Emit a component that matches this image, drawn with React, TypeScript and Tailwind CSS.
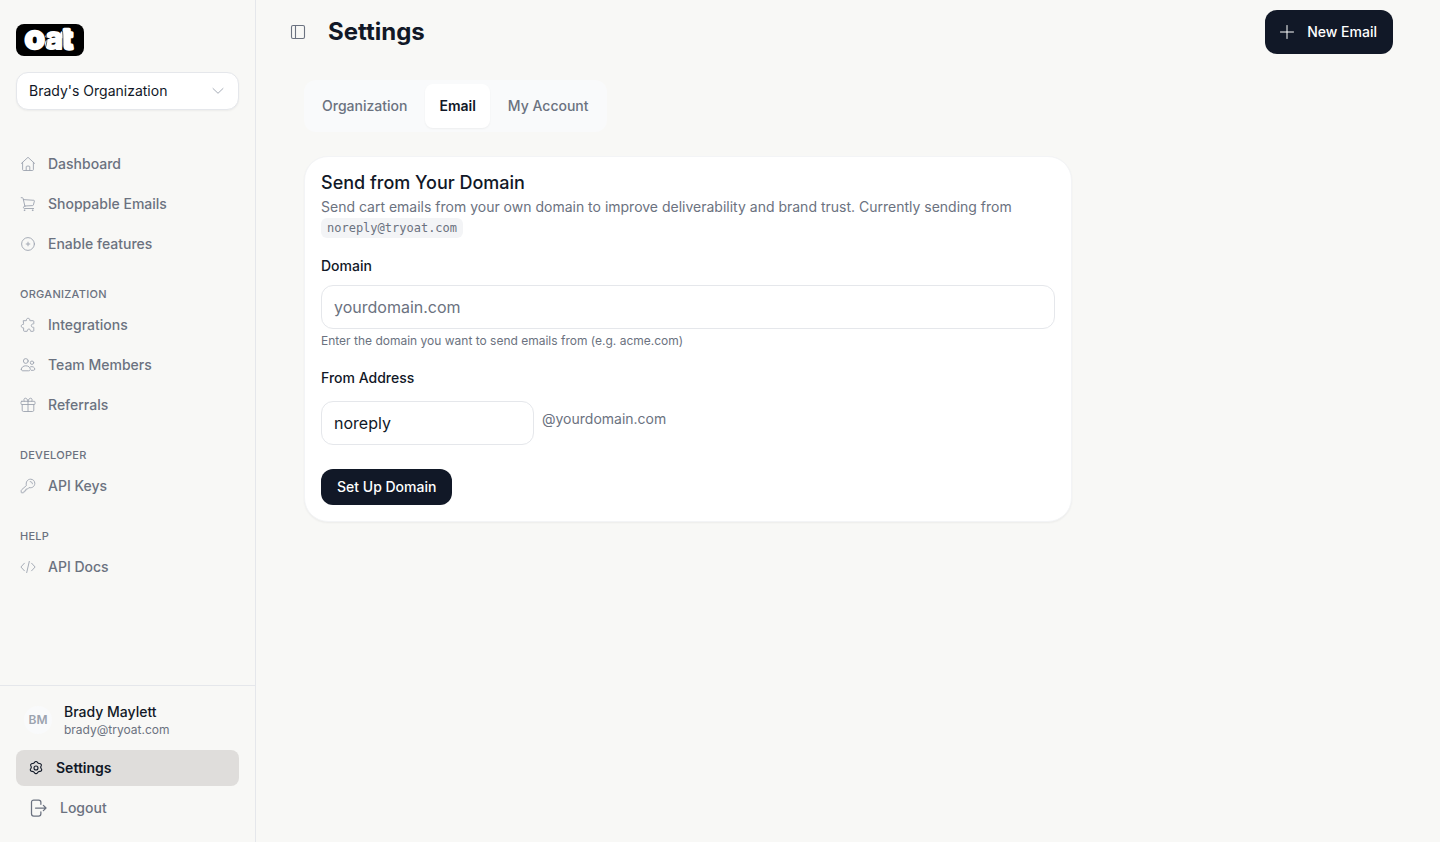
import type { ReactNode } from "react";

function Icon({ children, className = "size-4" }: { children: ReactNode; className?: string }) {
  return (
    <svg
      viewBox="0 0 16 16"
      fill="none"
      stroke="currentColor"
      strokeWidth="0.9"
      strokeLinecap="round"
      strokeLinejoin="round"
      aria-hidden="true"
      className={`shrink-0 ${className}`}
    >
      {children}
    </svg>
  );
}

const icons = {
  home: (
    <Icon>
      <path d="M1.4 7.4 8 1.3l6.6 6.1M2.6 6.4v7.2c0 .5.4.9.9.9h9c.5 0 .9-.4.9-.9V6.4M6.2 14.3v-3.4c0-.5.3-.8.8-.8h2c.5 0 .8.3.8.8v3.4" />
    </Icon>
  ),
  cart: (
    <Icon>
      <path d="M1.2 1.7h1.1c.4 0 .7.3.8.7l1.8 7.8M3.4 3.6l10.4.7c.4 0 .7.4.6.8l-1 3.8c-.1.4-.4.7-.8.7l-7.8.4M4.9 10.2c-.9 0-1.5.6-1.5 1.2s.5 1.1 1.2 1.1h9" />
      <circle cx="4.4" cy="14.2" r=".35" />
      <circle cx="12.6" cy="14.2" r=".35" />
    </Icon>
  ),
  plusCircle: (
    <Icon>
      <circle cx="8" cy="8" r="6.4" />
      <path d="M8 6.2v3.6M6.2 8h3.6" />
    </Icon>
  ),
  puzzle: (
    <Icon>
      <path d="M3.6 3.7h2.6c.3 0 .4-.3.3-.6-.2-.9.4-1.8 1.6-1.8s1.9.9 1.6 1.8c-.1.3.1.6.4.6h3c.4 0 .7.3.7.7v2.2c0 .3-.3.5-.6.4-1-.2-1.900.4-1.900 1.600s.9 1.800 1.900 1.600c.3-.1.6.1.6.4v3c0 .4-.3.7-.7.7h-2.300c-.3 0-.5-.3-.4-.6.2-.9-.5-1.600-1.500-1.600s-1.700.7-1.500 1.600c.1.3-.1.6-.4.6H4.300c-.4 0-.7-.3-.7-.7v-2.500c0-.3-.3-.5-.6-.4-.9.2-1.700-.5-1.700-1.600s.8-1.800 1.700-1.600c.3.1.6-.1.6-.4z" />
    </Icon>
  ),
  users: (
    <Icon>
      <circle cx="5.8" cy="4" r="2.4" />
      <circle cx="12" cy="5.7" r="1.7" />
      <path d="M1.3 12.3c0-2 2-3.5 4.5-3.5s4.500 1.500 4.500 3.500c0 1-.7 1.500-1.700 1.500H3c-1 0-1.700-.5-1.700-1.500zM10.500 9.800c2.200-.8 4.300.6 4.300 2.300 0 .7-.5 1.200-1.200 1.200h-2.200" />
    </Icon>
  ),
  gift: (
    <Icon>
      <rect x="1" y="4.3" width="14" height="3.2" rx=".8" />
      <path d="M2.2 7.5v5.7c0 .8.5 1.3 1.3 1.3h9c.8 0 1.3-.5 1.3-1.3V7.5M8 4.300v10.200M8 4.300C7.600 2.300 6.600 1.200 5.300 1.200S3.500 2.800 4.200 4.200M8 4.300c.4-2 1.400-3.100 2.700-3.100s1.800 1.600 1.100 3" />
    </Icon>
  ),
  key: (
    <Icon>
      <path d="M6.300 7.200C5.500 3.800 7.600 1.200 10.600 1.200c2.400 0 4.200 1.800 4.200 4.100 0 3-2.500 5.100-5.900 4.300l-1.300 1.400-1.700.2-.2 1.700-1.600.3-.2 1.200-.4.4H1.700c-.3 0-.5-.2-.5-.5v-1.700c0-.3.1-.5.3-.7z" />
      <path d="M10.200 3.600c1.300 0 2.200.9 2.200 2.200" />
    </Icon>
  ),
  code: (
    <Icon>
      <path d="M4.400 4.200.9 8l3.500 3.800M11.600 4.200 15.100 8l-3.500 3.800M9.300 2.400 6.700 13.600" />
    </Icon>
  ),
};

function NavLink({ icon, children }: { icon: ReactNode; children: ReactNode }) {
  return (
    <a href="#" className="flex h-9 items-center gap-3 rounded-lg px-1 text-sm font-medium text-[#6b7280]">
      <span className="text-[#9ca3af]">{icon}</span>
      {children}
    </a>
  );
}

function NavGroup({ title, children }: { title: string; children: ReactNode }) {
  return (
    <div className="mt-6">
      <h2 className="mb-1 px-1 text-[11px] leading-[17px] font-medium tracking-wide text-[#6b7280] uppercase">
        {title}
      </h2>
      <div className="flex flex-col gap-1">{children}</div>
    </div>
  );
}

function Logo() {
  return (
    <svg viewBox="0 0 68 32" className="h-8 w-[68px] overflow-visible" role="img" aria-label="oat">
      <rect width="68" height="32" rx="8" />
      <g
        fill="#fff"
        stroke="#fff"
        strokeLinejoin="round"
        fontFamily="Inter, sans-serif"
      >
        <text x="8.5" y="25" fontSize="33" fontWeight="800" strokeWidth="2.4">o</text>
        <text x="29" y="25" fontSize="31" fontWeight="700" strokeWidth="2">a</text>
        <text x="46" y="25" fontSize="28" fontWeight="800" strokeWidth="3.4">t</text>
      </g>
      <path d="M29.200 8c2.200 4 2.200 11 0 16M46.500 7c.8 5 .2 12 .8 18" fill="none" stroke="#000" strokeWidth=".6" />
    </svg>
  );
}

function Sidebar() {
  return (
    <aside className="flex w-64 shrink-0 flex-col border-r border-[#e5e7eb]">
      <div className="flex flex-col gap-4 px-4 pt-6">
        <Logo />
        <div className="grid items-center">
          <select
            aria-label="Organization"
            className="col-start-1 row-start-1 h-[38px] w-full appearance-none rounded-xl border border-[#e5e7eb] bg-white px-3 text-sm text-[#111827] shadow-xs"
          >
            <option>Brady's Organization</option>
          </select>
          <span className="pointer-events-none col-start-1 row-start-1 mr-3 justify-self-end text-[#9ca3af]">
            <Icon>
              <path d="m2 5.500 5 4.800 5-4.800" />
            </Icon>
          </span>
        </div>
      </div>
      <nav className="flex-1 px-4 pt-9">
        <div className="flex flex-col gap-1">
          <NavLink icon={icons.home}>Dashboard</NavLink>
          <NavLink icon={icons.cart}>Shoppable Emails</NavLink>
          <NavLink icon={icons.plusCircle}>Enable features</NavLink>
        </div>
        <NavGroup title="Organization">
          <NavLink icon={icons.puzzle}>Integrations</NavLink>
          <NavLink icon={icons.users}>Team Members</NavLink>
          <NavLink icon={icons.gift}>Referrals</NavLink>
        </NavGroup>
        <NavGroup title="Developer">
          <NavLink icon={icons.key}>API Keys</NavLink>
        </NavGroup>
        <NavGroup title="Help">
          <NavLink icon={icons.code}>API Docs</NavLink>
        </NavGroup>
      </nav>
      <div className="border-t border-[#e5e7eb] p-4">
        <div className="mb-3 flex items-center gap-3 px-2">
          <span className="flex size-7 items-center justify-center rounded-full bg-[#f9fafb] text-xs font-semibold text-[#9ca3af]">
            BM
          </span>
          <div>
            <p className="text-sm font-medium text-[#111827]">Brady Maylett</p>
            <p className="text-xs text-[#6b7280]">brady@tryoat.com</p>
          </div>
        </div>
        <a
          href="#"
          aria-current="page"
          className="flex h-9 items-center gap-3 rounded-lg bg-[#dfdddb] px-3 text-sm font-semibold text-[#111827]"
        >
          <Icon>
            <path
              strokeWidth="1.1"
              d="M6.600 2.300c.6-1.100 2.200-1.100 2.800 0 .4.800 1.100 1.200 2 1.200 1.500 0 2.400 1.200 1.700 2.500-.5.800-.5 1.500-.1 2.200.2.300.3.500.5.700.6 1.300-.2 2.500-1.700 2.500-1.100 0-1.800.4-2.300 1.300-.6 1.200-2.400 1.200-3 0-.5-.9-1.200-1.300-2.300-1.300-1.500 0-2.300-1.200-1.700-2.500.2-.2.3-.4.5-.7.4-.7.4-1.400-.1-2.200-.7-1.300.2-2.500 1.700-2.500.9 0 1.600-.4 2-1.200z"
            />
            <circle cx="8" cy="8" r="2" strokeWidth="1.1" />
          </Icon>
          Settings
        </a>
        <button type="button" className="mt-1 flex h-9 w-full items-center gap-3 px-3 text-sm font-medium text-[#6b7280]">
          <Icon className="size-5">
            <path d="M10.300 5V3.400c0-1.100-.7-1.800-1.800-1.800H4.600c-1.100 0-1.800.7-1.800 1.800v9.200c0 1.100.7 1.800 1.800 1.800h3.900c1.100 0 1.800-.7 1.800-1.800V11M6 8h8.300M12.300 5.900 14.400 8l-2.100 2.100" strokeWidth="1" />
          </Icon>
          Logout
        </button>
      </div>
    </aside>
  );
}

function Tab({ active = false, children }: { active?: boolean; children: ReactNode }) {
  return (
    <button
      type="button"
      role="tab"
      aria-selected={active}
      className={`h-11 rounded-lg px-3.5 text-sm ${
        active ? "bg-white font-semibold text-[#111827] shadow-xs" : "font-medium text-[#6b7280]"
      }`}
    >
      {children}
    </button>
  );
}

function DomainCard() {
  return (
    <section className="max-w-3xl rounded-3xl border border-[#f3f4f6] bg-white p-4 shadow-xs">
      <h2 className="text-lg leading-5 font-medium text-[#111827]">Send from Your Domain</h2>
      <p className="mt-1 text-sm text-[#6b7280]">
        Send cart emails from your own domain to improve deliverability and brand trust. Currently sending from{" "}
        <code className="rounded-md bg-[#f3f4f6] px-1.5 py-[3px] font-['DejaVu_Sans_Mono',monospace] text-xs">
          noreply@tryoat.com
        </code>
      </p>
      <form>
        <label htmlFor="domain" className="mt-[19px] block text-sm font-medium text-[#111827]">
          Domain
        </label>
        <input
          id="domain"
          type="text"
          placeholder="yourdomain.com"
          className="mt-[9px] block h-11 w-full rounded-xl border border-[#e5e7eb] px-3 text-base text-[#111827] placeholder:text-[#6b7280]"
        />
        <p className="mt-1 text-xs text-[#6b7280]">Enter the domain you want to send emails from (e.g. acme.com)</p>
        <label htmlFor="from" className="mt-[19px] block text-sm font-medium text-[#111827]">
          From Address
        </label>
        <div className="mt-[13px] flex gap-2">
          <input
            id="from"
            type="text"
            defaultValue="noreply"
            className="h-11 w-[213px] rounded-xl border border-[#e5e7eb] px-3 text-base text-[#111827]"
          />
          <span className="pt-2 text-sm text-[#6b7280]">@yourdomain.com</span>
        </div>
        <button type="button" className="mt-6 block h-9 rounded-xl bg-[#111827] px-4 text-sm font-medium text-white">
          Set Up Domain
        </button>
      </form>
    </section>
  );
}

export default function App() {
  return (
    <div className="flex min-h-screen bg-[#f8f8f6] font-['Inter',sans-serif]">
      <Sidebar />
      <div className="min-w-0 flex-1">
        <header className="flex h-16 items-center pr-[47px] pl-7">
          <button type="button" aria-label="Toggle sidebar" className="flex size-7 items-center justify-center text-[#6b7280]">
            <Icon>
              <rect x="1.500" y="1.500" width="13" height="13" rx="1.500" strokeWidth="1.100" />
              <path d="M5.500 1.500v13" strokeWidth="1.100" />
            </Icon>
          </button>
          <h1 className="ml-4 text-2xl font-bold text-[#111827]">Settings</h1>
          <button
            type="button"
            className="ml-auto flex h-11 items-center gap-3 rounded-xl bg-[#111827] pr-4 pl-3.5 text-sm font-medium text-white"
          >
            <Icon>
              <path d="M8 1.500v13M1.500 8h13" strokeWidth="1" />
            </Icon>
            New Email
          </button>
        </header>
        <main className="px-12 pt-4">
          <div role="tablist" className="mb-6 flex w-fit gap-1 rounded-xl bg-[#f9fafb] p-1">
            <Tab>Organization</Tab>
            <Tab active>Email</Tab>
            <Tab>My Account</Tab>
          </div>
          <DomainCard />
        </main>
      </div>
    </div>
  );
}
